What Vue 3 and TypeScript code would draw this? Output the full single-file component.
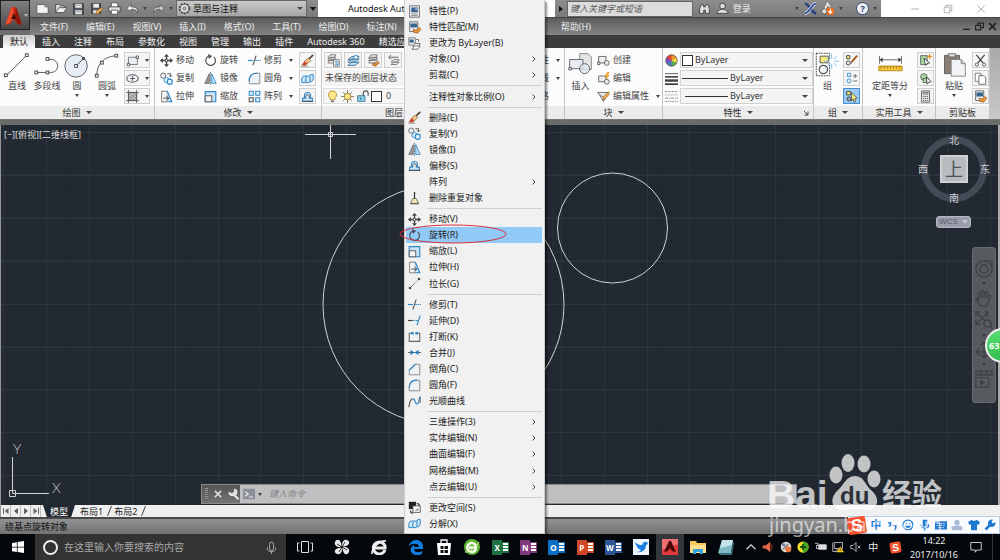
<script setup lang="ts">
import { h, ref } from 'vue'

const art: Record<string, string> = {
  logo: '<path d="M2 16 7 1h4l5 15-4-1-3-4-3 4z" fill="#c4240f"/><path d="M7 1h2v9l-3 4-4 2z" fill="#ee4a2c"/><path d="M11 1l5 15-4-1-2-5z" fill="#8e1508"/><path d="M9 6l2 5H7z" fill="#3a0a06"/>',
  fresh: '<path d="M1 3h10l4 3v8H1z" fill="#f2f2f2" stroke="#555"/><path d="M11 3v3h4" fill="#ccc" stroke="#555"/>',
  open: '<path d="M2 13V3h5l1 2h5v2" fill="#ddd" stroke="#444"/><path d="M2 13l4-6h10l-4 6z" fill="#eee" stroke="#444"/>',
  save: '<path d="M2 2h12v13H2z" fill="#4d565f" stroke="#333"/><path d="M4 2h8v5H4zM4 10h8v5H4z" fill="#e8e8e8"/><path d="M5 4h6M5 12h6" stroke="#888"/>',
  saveas: '<path d="M2 2h11v12H2z" fill="#4d565f" stroke="#333"/><path d="M4 2h7v5H4zM4 10h7v4H4z" fill="#e8e8e8"/><path d="M7 15l1-4 6-4 2 2-6 5z" fill="#f0b050" stroke="#7b4b1a" stroke-width=".7"/>',
  print: '<path d="M4 6V1h8v5" fill="#fff" stroke="#444"/><path d="M1 6h14v6H1z" fill="#e3e3e3" stroke="#333"/><path d="M4 10h8v5H4z" fill="#fff" stroke="#444"/>',
  undo: '<path d="M14 13c1-6-3-7-8-7V3L1 8l5 4V9c4 0 6 0 8 4z" fill="#eee" stroke="#444" stroke-width=".8"/>',
  redo: '<path d="M2 13C1 7 5 6 10 6V3l5 5-5 4V9c-4 0-6 0-8 4z" fill="#ccc" stroke="#444" stroke-width=".8"/>',
  gear: '<circle cx="8" cy="8" r="6" fill="none" stroke="#555" stroke-width="2.4" stroke-dasharray="2.4 1.4"/><circle cx="8" cy="8" r="5" fill="#eee" stroke="#555"/><circle cx="8" cy="8" r="2" fill="#bbb" stroke="#555"/>',
  line: '<path d="M3 27 26 4" stroke="#555" fill="none"/><rect x="1.500" y="24.500" width="3" height="3" fill="#fff" stroke="#444"/><rect x="24" y="3" width="3" height="3" fill="#fff" stroke="#444"/>',
  pline: '<path d="M5 23h14a7 7 0 0 0 1-14h-3" stroke="#555" fill="none"/><rect x="2" y="21.500" width="3" height="3" fill="#fff" stroke="#444"/><rect x="14" y="7" width="3" height="3" fill="#fff" stroke="#444"/><rect x="14" y="21.500" width="3" height="3" fill="#fff" stroke="#444"/>',
  circle: '<circle cx="14" cy="16" r="12" fill="#e6edf5" stroke="#5a5f66"/><path d="M14 16 22 8" stroke="#444"/><rect x="12.500" y="14.500" width="3" height="3" fill="#fff" stroke="#444"/><rect x="21" y="7" width="2" height="2" fill="#fff" stroke="#444"/>',
  arc: '<path d="M4 27C4 14 11 6 25 5" stroke="#555" fill="none"/><rect x="2.500" y="25" width="3" height="3" fill="#fff" stroke="#444"/><rect x="8" y="11" width="3" height="3" fill="#fff" stroke="#444"/><rect x="23.500" y="3.500" width="3" height="3" fill="#fff" stroke="#444"/>',
  rect: '<path d="M3 4h11v9H3z" fill="#e8eef4" stroke="#666"/><path d="M1.500 11.500h3v3h-3zM12.500 2.500h3v3h-3z" fill="#fff" stroke="#444"/>',
  ellipse: '<ellipse cx="8" cy="8" rx="7" ry="4.500" fill="#f1f4f8" stroke="#555" stroke-width="1.300"/><path d="M8 5v6M5 8h6" stroke="#444"/>',
  hatch: '<path d="M3 3h10v10H3z" fill="#bbb" stroke="#555"/><path d="M3 7l4-4M3 11l8-8M4 13l9-9M8 13l5-5" stroke="#888"/><path d="M3 0v16M13 0v16M0 3h16M0 13h16" stroke="#555"/>',
  move: '<path d="M8 1v14M1 8h14" stroke="#444" stroke-width="1.600"/><path d="M8 0 5 3.500h6zM8 16l-3-3.500h6zM0 8l3.500-3v6zM16 8l-3.500-3v6z" fill="#444"/><path d="M6.500 6.500h3v3h-3z" fill="#fff" stroke="#444"/>',
  copy: '<circle cx="4" cy="4.500" r="3.200" fill="#eef" stroke="#555"/><circle cx="8" cy="10" r="3.200" fill="#dff0fc" stroke="#2d86c8"/><circle cx="12" cy="12" r="3.200" fill="#dff0fc" stroke="#2d86c8" stroke-width="1.300"/><path d="M9 2h4v3M11 4l2 2 2-2" fill="none" stroke="#444"/>',
  stretch: '<path d="M2 1.500h7v13H2z" fill="#f6f6f6" stroke="#666"/><path d="M9 1.500l5.500 13H9" fill="#cfe8fa" stroke="#2d86c8" stroke-width="1.400"/><path d="M4 10h6M8 7.500l3 2.500-3 2.500" stroke="#333" fill="none"/>',
  rotate: '<path d="M12 3.500A6 6 0 1 1 6 2.500" fill="none" stroke="#4a4f55" stroke-width="1.400"/><path d="M5 0l5 2.500L6 6z" fill="#4a4f55"/>',
  mirror: '<path d="M6.500 2v12H1z" fill="#999" stroke="#666"/><path d="M9.500 2v12H15z" fill="#bfe0f7" stroke="#2d86c8"/><path d="M8 0v16" stroke="#555" stroke-dasharray="2 1"/>',
  scale: '<path d="M1.500 2h13v12.500h-13z" fill="#c9e4f8" stroke="#2d86c8" stroke-width="1.400"/><path d="M1.500 7h8v7.500h-8z" fill="#f3f3f3" stroke="#666" stroke-width="1.300"/>',
  trim: '<path d="M0 8h6" stroke="#2d86c8" stroke-width="1.400"/><path d="M9 8h7" stroke="#2d86c8" stroke-width="1.400" stroke-dasharray="2 1"/><path d="M10 2 6 14" stroke="#555" stroke-width="1.400"/>',
  extend: '<path d="M0 8h6" stroke="#444" stroke-width="1.400"/><path d="M7 8h5" stroke="#2d86c8" stroke-width="1.400" stroke-dasharray="2 1"/><path d="M15 2l-4 12" stroke="#2d86c8" stroke-width="1.400"/>',
  fillet: '<path d="M1.500 14.500V11C1.500 5 5 1.500 11 1.500h3.500v13z" fill="#eef1f4" stroke="#777"/><path d="M1.500 11C1.500 5 5 1.500 11 1.500" stroke="#2d86c8" fill="none" stroke-width="1.500"/>',
  chamfer: '<path d="M1.500 14.500V9L9 1.500h5.500v13z" fill="#eef1f4" stroke="#777"/><path d="M1.500 9 9 1.500" stroke="#2d86c8" stroke-width="1.500"/>',
  array: '<g fill="#e6f3fc" stroke="#2d86c8" stroke-width="1.300"><path d="M1.500 1.500h5v5h-5zM9.500 1.500h5v5h-5zM9.500 9.500h5v5h-5z"/><path d="M1.500 9.500h5v5h-5z" stroke="#555" fill="#eee"/></g>',
  erase: '<path d="M15 1 9 7" stroke="#5b4638" stroke-width="2"/><path d="M9 5l3 3-4 4-4-3z" fill="#f2c48a" stroke="#7a4317" stroke-width=".7"/><path d="M4 9l4 3-3 2.500-4-1z" fill="#c8452c"/><path d="M0 15h9" stroke="#777"/>',
  explode: '<g fill="#cfe8fa" stroke="#2d86c8" stroke-width="1.200"><path d="M1 8l2-3h4v4l-2 4H1z"/><path d="M6 7l1-2h5v6l-2 2H6z"/><path d="M11 5l1-2h3v6l-2 3h-2z"/></g>',
  offset: '<path d="M2 14v-4h3c-2-4 0-7 3-7s5 3 3 7h3v4z" fill="#cfe8fa" stroke="#2d86c8" stroke-width="1.300"/><path d="M1 14h14M6 10c-1-3 0-4 2-4s3 1 2 4" fill="none" stroke="#4a4f55" stroke-width="1.200"/>',
  layers: '<g fill="#e8edf2" stroke="#5a6068"><path d="M2 12l4-4h8l-4 4z"/><path d="M2 9l4-4h8l-4 4z"/><path d="M2 6l4-4h8l-4 4z"/></g>',
  layerProp: '<g fill="#f2f2f2" stroke="#666"><path d="M1 11l3-4h7l-3 4zM1 8l3-4h7L8 8zM1 5l3-4h7L8 5z"/><path d="M8 7h7v8H8z"/></g><path d="M10 9h3M10 11h4M10 13h4" stroke="#2d86c8"/>',
  layerBlue: '<g fill="#bfe0f7" stroke="#33668c"><path d="M1 14l5-4h9l-5 4zM1 10l5-4h9l-5 4zM1 7l5-4h9l-5 4z"/></g><circle cx="11" cy="4" r="2.500" fill="#eee" stroke="#2d86c8"/>',
  layerMatch: '<g fill="#f2f2f2" stroke="#666"><path d="M2 11l3-4h8l-3 4zM2 8l3-4h8l-3 4zM2 5l3-4h8l-3 4z"/></g><path d="M7 11l3 1 4-3 1 2-4 4-4-1z" fill="#e08a32" stroke="#9b4c14" stroke-width=".7"/>',
  layerPrev: '<g fill="#f2f2f2" stroke="#666"><path d="M5 13l3-3h7l-3 3zM5 10l3-3h7l-3 3z"/></g><path d="M14 4H3M5 1 2 4l3 3" stroke="#444" fill="none"/>',
  bulb: '<path d="M8 1a5 5 0 0 0-3 9v2h6v-2a5 5 0 0 0-3-9z" fill="#ffe88a" stroke="#b08a2a"/><path d="M6 13h4v2H6z" fill="#777"/>',
  sun: '<path d="M8 0v16M0 8h16M2.500 2.500l11 11M13.500 2.500l-11 11" stroke="#776a45"/><circle cx="8" cy="8" r="4" fill="#ffe98a" stroke="#8a7130"/>',
  lock: '<path d="M2 7h9v7H2z" fill="#8fd0ea" stroke="#2b6d8c"/><path d="M9 7V4a3 3 0 0 1 6 0v3" fill="none" stroke="#555" stroke-width="1.400"/><path d="M6 9v3" stroke="#245"/>',
  insert: '<path d="M14 2h10l4 4v15H14z" fill="#e5e5e5" stroke="#777"/><path d="M2 9h16v11H2z" fill="#e7edf3" stroke="#555"/><circle cx="20" cy="20" r="6" fill="#dfe7ef" fill-opacity=".8" stroke="#555"/><path d="M1 18.500h3v3H1z" fill="#fff" stroke="#444"/>',
  create: '<path d="M2 3h9v8H2z" fill="#eee" stroke="#555"/><circle cx="12" cy="11" r="3" fill="#e2eaf2" stroke="#555"/><path d="M.5 10h3v3h-3z" fill="#fff" stroke="#444"/>',
  blockEdit: '<path d="M2 5h9v7H2z" fill="#eee" stroke="#555"/><circle cx="12" cy="12" r="3" fill="#e2eaf2" stroke="#555"/><path d="M13 0l-3 5h2l-1 4 4-5h-2l2-4z" fill="#ffb52e" stroke="#d77f14" stroke-width=".6"/>',
  attr: '<path d="M1 3h12l-5 11z" fill="#eee" stroke="#555"/><path d="M4 6l4 3" stroke="#555"/><path d="M7 12l1-4 6-6 2 2-6 7z" fill="#f0b050" stroke="#7b4b1a" stroke-width=".7"/>',
  wheel: '<circle cx="8" cy="8" r="7" fill="#e5432f"/><path d="M8 8 8 1a7 7 0 0 1 6 3.500z" fill="#f39a2d"/><path d="M8 8l6-3.500a7 7 0 0 1 0 7z" fill="#f6e04c"/><path d="M8 8l6 3.500A7 7 0 0 1 8 15z" fill="#4bae4f"/><path d="M8 8v7a7 7 0 0 1-6-3.500z" fill="#3e7fd0"/><path d="M8 8l-6 3.500a7 7 0 0 1 0-7z" fill="#7a4fc0"/><circle cx="8" cy="8" r="7" fill="none" stroke="#555"/>',
  weights: '<path d="M0 2h16" stroke="#444"/><path d="M0 6h16" stroke="#444" stroke-width="2"/><path d="M0 10.500h16" stroke="#444" stroke-width="3"/><path d="M0 15h16" stroke="#333" stroke-width="2"/>',
  types: '<path d="M0 2h16" stroke="#777" stroke-dasharray="3 1"/><path d="M0 6h16" stroke="#777" stroke-dasharray="1 1"/><path d="M0 10h16" stroke="#777" stroke-dasharray="4 1 1 1"/><path d="M0 14h16" stroke="#777" stroke-dasharray="2 1"/>',
  group: '<path d="M1.500 1.500h16v27h-16z" fill="none" stroke="#222" stroke-dasharray="2 1"/><path d="M6 5h10v8H6z" fill="#fbe97d" stroke="#444"/><circle cx="10" cy="21" r="5" fill="#eef3f8" stroke="#555" stroke-width="1.500"/><path d="M20 2v18M11 11h18M14 5l12 12M26 5 14 17" stroke="#6bb8ea"/><circle cx="20" cy="11" r="3" fill="#fff"/>',
  groupEdit: '<path d="M2 2h4v4H2z" fill="#fbe97d" stroke="#333"/><circle cx="4" cy="11" r="2.500" fill="#eee" stroke="#333"/><path d="M8 10l7-8" stroke="#a35a1e" stroke-width="2.400"/><path d="M7 12l1-2" stroke="#333"/>',
  ungroup: '<path d="M3 1.500h4v4H3z" fill="#dff0fc" stroke="#2d86c8"/><circle cx="5" cy="11" r="2.500" fill="#dff0fc" stroke="#2d86c8"/><path d="M10 5h5M12.500 2.500v5M10 11h5" stroke="#555"/>',
  groupPick: '<path d="M2 2h5v4H2z" fill="#fbe97d" stroke="#333"/><circle cx="5" cy="11" r="2.500" fill="#9ab" stroke="#333"/><path d="M8 3l7 7-3 .5 1 4-2 .5-1-4-2 2z" fill="#fbe97d" stroke="#333" stroke-width=".8"/>',
  measure: '<path d="M2 5v10M30 5v10M3 10h26" stroke="#444"/><path d="M2 10l4-3v6zM30 10l-4-3v6z" fill="#444"/><path d="M1 18h30v6H1z" fill="#f5c338" stroke="#a97b10"/><path d="M4 18v3M8 18v3M12 18v3M16 18v3M20 18v3M24 18v3M28 18v3" stroke="#8a6410"/>',
  pick: '<path d="M2 2h8v11H2z" fill="#a9d9a0" stroke="#555"/><path d="M6 5l7 6-3 .5L8 14z" fill="#fff" stroke="#333"/><path d="M13 0v6M10 3h6" stroke="#e88e1e" stroke-width="1.500"/>',
  select: '<circle cx="6" cy="6" r="4" fill="#a9d9a0" stroke="#555"/><path d="M5 8h7v5H5z" fill="#a9d9a0" stroke="#555"/><path d="M9 6l6 6-3 .5L10 15z" fill="#fff" stroke="#333"/>',
  calc: '<path d="M3 1h10v14H3z" fill="#e2e2e2" stroke="#555"/><path d="M5 3h6v2H5z" fill="#fff" stroke="#555"/><path d="M5 8h6M5 10.500h6M5 13h6" stroke="#555" stroke-dasharray="1.500 .8"/>',
  paste: '<path d="M3 4h18v22H3z" fill="#8b8078" stroke="#555"/><path d="M8 2h8v4H8z" fill="#ddd" stroke="#555"/><path d="M11 9h12l5 5v15H11z" fill="#f1f3f6" stroke="#777"/><path d="M23 9v5h5" fill="#ccd" stroke="#777"/>',
  cut: '<path d="M3 1l8 10M13 1 5 11" stroke="#444" stroke-width="1.600"/><circle cx="3.500" cy="13" r="2" fill="none" stroke="#444"/><circle cx="12.500" cy="13" r="2" fill="none" stroke="#444"/>',
  pages: '<path d="M1.500 1.500h7v10h-7z" fill="#fff" stroke="#666"/><path d="M6 4.500h6l2.500 2.500v8H6z" fill="#fff" stroke="#555"/>',
  props: '<path d="M2 1h12v14H2z" fill="#f3f3f3" stroke="#555"/><path d="M4 3h8v6H4z" fill="#35628f"/><path d="M9 4h2v2H9z" fill="#bcd"/><path d="M4 11h8M4 13h8" stroke="#777"/>',
  match: '<path d="M2 1h10v12H2z" fill="#f3f3f3" stroke="#555"/><path d="M3 3h8v5H3z" fill="#35628f"/><path d="M6 10l4 1 4-3 2 2-4 5-5-1z" fill="#e8953a" stroke="#8a4a14" stroke-width=".7"/>',
  bylayer: '<path d="M1 1h8v9H1z" fill="#f3f3f3" stroke="#666"/><path d="M2 3h5v4H2z" fill="#35628f"/><path d="M10 3h3v3M5 15l3-4h7l-3 4zM6 12l2-4h7l-2 3" fill="#fff" stroke="#555"/>',
  broom: '<path d="M8 0v8" stroke="#333" stroke-width="1.500"/><path d="M6 8h4l3 6H3z" fill="#f4e9b8" stroke="#555"/><path d="M3 14.500h10" stroke="#444"/>',
  lengthen: '<path d="M3 13 8 8" stroke="#555"/><path d="M8 8l5-5" stroke="#2d86c8" stroke-dasharray="2 1"/><circle cx="2.500" cy="13.500" r="1.600" fill="#444"/><circle cx="13.500" cy="2.500" r="1.600" fill="#444"/>',
  breakAt: '<path d="M5 4H1.500v10h13V4H11" fill="#f0f2f4" stroke="#666" stroke-width="1.300"/><path d="M4 4h3M9 4h3" stroke="#2d86c8" stroke-width="3"/>',
  join: '<path d="M0 8h16" stroke="#444"/><path d="M3 5l5 3-5 3zM13 5 8 8l5 3z" fill="#2478b8"/>',
  blend: '<path d="M1 15C2 8 3 6 5 5" fill="none" stroke="#555" stroke-width="1.400"/><path d="M5 5c4-2 3 6 6 6s2-6 4-9" fill="none" stroke="#2d86c8" stroke-width="1.500"/><path d="M15 2v8" stroke="#555"/>',
  space: '<path d="M1 1h9v9H1z" fill="#222"/><path d="M6 6h9v8H6z" fill="#fff" stroke="#444"/><path d="M3 12c0 2 1 3 3 3M11 3c2 0 3 1 3 3" fill="none" stroke="#222" stroke-width="1.300"/><path d="M8 12l5-4v4z" fill="#999"/>',
  binoc: '<path d="M2 14V8l2-5h2l1 3h2l1-3h2l2 5v6h-5v-4H7v4z" fill="#ddd" stroke="#333"/>',
  person: '<circle cx="8" cy="5" r="3.500" fill="#ddd" stroke="#333"/><path d="M1 14c1-4 4-5 7-5s6 1 7 5z" fill="#ddd" stroke="#333"/>',
  exchange: '<path d="M1 2c3 0 4 2 7 6s4 6 7 6" stroke="#2c3f84" stroke-width="3" fill="none"/><path d="M15 2c-3 0-4 2-7 6s-4 6-7 6" stroke="#dfe6ff" stroke-width="4" fill="none"/><path d="M15 2c-3 0-4 2-7 6s-4 6-7 6" stroke="#35509a" stroke-width="2.400" fill="none"/>',
  cloud: '<path d="M4 11 8 2l3 4" fill="none" stroke="#eee" stroke-width="2"/><circle cx="4" cy="11.500" r="3.200" fill="#ddd" stroke="#555"/><path d="M7 7h9v9H7z" fill="#e56a1c"/><path d="M11.500 8v5M9 11l2.500 3 2.500-3" fill="none" stroke="#fff" stroke-width="1.300"/>',
  min: '<path d="M2 8h12" stroke="currentColor"/>',
  restore: '<path d="M2 5h9v9H2zM5 5V2h9v9h-3" fill="none" stroke="currentColor"/>',
  close: '<path d="M2 2l12 12M14 2 2 14" stroke="currentColor"/>',
  minB: '<path d="M2 13h12" stroke="#222" stroke-width="2.500"/>',
  restoreB: '<path d="M1 6h9v8H1zM5 6V2h10v8h-5" fill="none" stroke="#222" stroke-width="1.800"/>',
  closeB: '<path d="M2 2l12 12M14 2 2 14" stroke="#222" stroke-width="3"/>',
  closeL: '<path d="M3 3l10 10M13 3 3 13" stroke="#ddd" stroke-width="2.400"/>',
  wrench: '<path d="M14 15 7 8" stroke="currentColor" stroke-width="3"/><path d="M8 1v4L5 7 1 5a4.500 4.500 0 0 0 7 5 4.500 4.500 0 0 0 0-9z" fill="currentColor"/>',
  wrench2: '<path d="M2 14l7-7" stroke="currentColor" stroke-width="3.400"/><path d="M15 4l-3 2L10 4l2-3a5 5 0 1 0 3 3z" fill="currentColor"/>',
  first: '<path d="M4 3v10" stroke="#666" stroke-width="1.600"/><path d="M12 3v10L6 8z" fill="#666"/>',
  prev: '<path d="M11 3v10L5 8z" fill="#555"/>',
  next: '<path d="M5 3v10l6-5z" fill="#555"/>',
  last: '<path d="M12 3v10" stroke="#666" stroke-width="1.600"/><path d="M4 3v10l6-5z" fill="#666"/>',
  win: '<path d="M0 2.500 6.500 1.500v6H0zM7.500 1.300 16 0v7.500H7.500zM0 8.500h6.500v6L0 13.500zM7.500 8.500H16V16l-8.500-1.300z" fill="#fff"/>',
  mic: '<path d="M5.500 4a2.500 2.500 0 0 1 5 0v5a2.500 2.500 0 0 1-5 0zM3 8v2c0 4 10 4 10 0V8M8 13v3" fill="none" stroke="#aaa" stroke-width="1.200"/>',
  taskview: '<path d="M4.500 2.500h7v11h-7zM2.500 4H.5v8h2M13.500 4h2v8h-2" fill="none" stroke="#ddd"/>',
  swirl: '<g fill="#e8e8e8"><path d="M7.600 7.600C3 9 0 6 1 3s6-4 6.600 4.600z"/><path d="M8.400 7.600C7 3 10 0 13 1s4 6-4.600 6.600z"/><path d="M8.400 8.400C13 7 16 10 15 13s-6 4-6.600-4.600z"/><path d="M7.600 8.400C9 13 6 16 3 15s-4-6 4.600-6.600z"/></g><path d="M8 8 3 5M8 8l3-5M8 8l5 3M8 8l-3 5" stroke="#06090d" stroke-width=".8"/>',
  ie: '<path d="M14 11A6 6 0 1 1 14 7v2H4" fill="none" stroke="#eee" stroke-width="3"/><path d="M1 15C0 10 9 1 15 2" fill="none" stroke="#eee" stroke-width="1.600"/>',
  edge: '<path d="M1 7C3-1 15-1 15 8v2H6c0 4 5 4 8 2v3C8 18 1 15 3 9c1-2 3-3 4-3-1 1-1 1-1 2h5c0-4-7-4-10-1z" fill="#0f7fe0"/>',
  store: '<path d="M1 4h14l-1 12H2z" fill="#fff"/><path d="M5 4V1h6v3" fill="none" stroke="#fff" stroke-width="1.300"/><path d="M4.500 7h3v3h-3zM8.500 7h3.500v3H8.500zM4.500 11h3v3h-3zM8.500 11h3.500v3H8.500z" fill="#111"/>',
  browser: '<circle cx="8" cy="8" r="8" fill="#5cb52f"/><path d="M12 10A4.500 4.500 0 1 1 12 7v1.500H5" fill="none" stroke="#fff" stroke-width="2.400"/><path d="M1 13C4 14 14 7 15 3" stroke="#e5f19a" fill="none"/>',
  folder: '<path d="M0 2h6l1 2h9v10H0z" fill="#f5c95b"/><path d="M0 6h16v8H0z" fill="#fde08b"/><path d="M3 15v-5h10v5h-3v-2H6v2z" fill="#35a0dc"/>',
  bird: '<path d="M0 0h16v16H0z" fill="#eef6fd"/><path d="M2 3c3 3 5 3 7 3 1-3 3-4 5-3l1 2-2 1c0 5-4 8-9 7 2 0 3-1 4-2C5 10 3 7 2 3z" fill="#1c7fe0"/>',
  acad: '<path d="M0 0h16v16H0z" fill="#e23a3a"/><path d="M0 0h16v5L0 11z" fill="#ee7070"/><path d="M2 13 7 2h2l5 11-4-1-2-3-2 3z" fill="#4a0808"/>',
  note: '<path d="M4 1h11l-2 13H0z" fill="#7fb9c4"/><path d="M4 1h11l-1 5L2 9z" fill="#c5e3e6"/><path d="M0 14h13l2-11 1 1-2 12H2z" fill="#3f6f7c"/>',
  up: '<path d="M2 11l6-6 6 6" fill="none" stroke="#ddd" stroke-width="1.500"/>',
  horn: '<path d="M1 6h4l6-5v14l-6-5H1z" fill="#e4674a"/><path d="M13 4v8" stroke="#7b2b1c" stroke-width="1.500"/>',
  qball: '<circle cx="8" cy="8" r="7" fill="#ddd"/><path d="M4 11 11 4" stroke="#777" stroke-width="2"/><circle cx="11" cy="11" r="4" fill="#e8793e"/><circle cx="5" cy="5" r="2" fill="#67a"/>',
  plusball: '<circle cx="8" cy="8" r="7.500" fill="#f1dd28"/><path d="M8 0.500a7.500 7.500 0 0 1 0 15z" fill="#48a82c"/><path d="M8 4v8M4 8h8" stroke="#15540f" stroke-width="2.500"/>',
  battery: '<path d="M5 5h10v6H5z" fill="#ddd" stroke="#eee"/><path d="M0 3h4v3H2v4h3" fill="none" stroke="#eee"/>',
  network: '<path d="M3 2h11v8H3zM1 2v12h6M5 12h4" fill="none" stroke="#ddd"/><path d="M11 7l5 8H6z" fill="#f6c21c"/><path d="M11 10v3" stroke="#222"/>',
  mute: '<path d="M1 6h3l4-4v12l-4-4H1z" fill="none" stroke="#ddd"/><path d="M10 6l4 4M14 6l-4 4" stroke="#ddd"/>',
  notice: '<path d="M1 2h14v10H9l-2 3v-3H1z" fill="none" stroke="#ddd" stroke-width="1.200"/>',
  smile: '<circle cx="8" cy="8" r="6.500" fill="none" stroke="#1f78d0" stroke-width="1.800"/><path d="M4 9c2 4 6 4 8 0z" fill="#1f78d0"/><path d="M5.500 5v2M10.500 5v2" stroke="#1f78d0" stroke-width="1.500"/>',
  micB: '<path d="M5 1h6v9H5z" fill="#1f78d0"/><path d="M3 7c0 7 10 7 10 0M8 12v4" fill="none" stroke="#1f78d0" stroke-width="1.600"/>',
  keyb: '<path d="M0 3h16v11H0z" fill="#1f78d0"/><path d="M2 6h12M2 8.500h12M4 11.500h8" stroke="#fff" stroke-dasharray="2 1"/>',
  user: '<circle cx="8" cy="4.500" r="3.500" fill="#a9b9d8"/><path d="M1 15V11c1-3 13-3 14 0v4z" fill="#a9b9d8"/>',
  shirt: '<path d="M5 1c1 2 5 2 6 0l5 3-2 4-2-1v8H4V7L2 8 0 4z" fill="#1f78d0"/>',
  comma: '<path d="M3 5h3v3L4 10M9 9h4v3l-2 3" fill="none" stroke="#1f78d0" stroke-width="2"/>',
  hand: '<path d="M7 21 1 13c-1-3 2-2 4 1L4 5c0-2 3-2 3 0l1 6V3c0-2 3-2 3 0v8l2-7c0-2 3-1 3 0l-2 8 3-4c1-1 3 0 2 2l-4 9-2 2z" fill="none" stroke="#3d4146" stroke-width="1.500"/>',
  steer: '<circle cx="10" cy="10" r="9" fill="none" stroke="#3d4146" stroke-width="1.500"/><circle cx="10" cy="10" r="4.500" fill="none" stroke="#3d4146" stroke-width="1.500"/><path d="M10 1h9v9" fill="none" stroke="#3d4146"/>',
  zoomx: '<path d="M2 2l12 12M14 2 2 14M1 6V1h5M10 1h4v5M1 10v5h5" fill="none" stroke="#3d4146" stroke-width="1.500"/><circle cx="14" cy="14" r="4" fill="#575b5f" stroke="#3d4146" stroke-width="1.500"/><path d="M17 17l3 3" stroke="#3d4146" stroke-width="2"/>',
  orbit: '<path d="M10 1v18M1 12h16M10 1 6 5M10 1l4 4M1 12l4-4M1 12l4 4M10 19l-4-4M10 19l4-4" fill="none" stroke="#3d4146" stroke-width="1.500"/>',
  motion: '<path d="M1 1h5v5H1zM8 1h5v5H8zM15 1h5v5h-5zM1 9h15v11H1z" fill="none" stroke="#3d4146" stroke-width="1.300"/><path d="M6 11v7l6-3.500z" fill="#3d4146"/>',
  prompt: '<path d="M0 1h16v14H0z" fill="#8b909a"/><path d="M3 5l4 3-4 3M8 12h5" fill="none" stroke="#eee" stroke-width="1.500"/>',
}

const Icon = (p: { name: string; box?: number }) =>
  h('svg', { viewBox: `0 0 ${p.box ?? 16} ${p.box ?? 16}`, 'aria-hidden': 'true', innerHTML: art[p.name] ?? '' })
Icon.props = ['name', 'box']

const menus = ['文件(F)', '编辑(E)', '视图(V)', '插入(I)', '格式(O)', '工具(T)', '绘图(D)', '标注(N)', '帮助(H)']
const tabs = ['默认', '插入', '注释', '布局', '参数化', '视图', '管理', '输出', '插件', 'Autodesk 360', '精选应用']
const active = ref('默认')

const drawTools = [
  { icon: 'line', label: '直线', more: false },
  { icon: 'pline', label: '多段线', more: false },
  { icon: 'circle', label: '圆', more: true },
  { icon: 'arc', label: '圆弧', more: true },
]
const modify = [
  [['move', '移动'], ['copy', '复制'], ['stretch', '拉伸']],
  [['rotate', '旋转'], ['mirror', '镜像'], ['scale', '缩放']],
  [['trim', '修剪'], ['fillet', '圆角'], ['array', '阵列']],
]
const propRows = [
  { icon: 'wheel', name: '颜色', kind: 'color' },
  { icon: 'weights', name: '线宽', kind: 'weight' },
  { icon: 'types', name: '线型', kind: 'type' },
]

interface Entry { text: string; icon?: string; sub?: boolean }
const groups: Entry[][] = [
  [
    { text: '特性(P)', icon: 'props' },
    { text: '特性匹配(M)', icon: 'match' },
    { text: '更改为 ByLayer(B)', icon: 'bylayer' },
    { text: '对象(O)', sub: true },
    { text: '剪裁(C)', sub: true },
  ],
  [{ text: '注释性对象比例(O)', sub: true }],
  [
    { text: '删除(E)', icon: 'erase' },
    { text: '复制(Y)', icon: 'copy' },
    { text: '镜像(I)', icon: 'mirror' },
    { text: '偏移(S)', icon: 'offset' },
    { text: '阵列', sub: true },
    { text: '删除重复对象', icon: 'broom' },
  ],
  [
    { text: '移动(V)', icon: 'move' },
    { text: '旋转(R)', icon: 'rotate' },
    { text: '缩放(L)', icon: 'scale' },
    { text: '拉伸(H)', icon: 'stretch' },
    { text: '拉长(G)', icon: 'lengthen' },
  ],
  [
    { text: '修剪(T)', icon: 'trim' },
    { text: '延伸(D)', icon: 'extend' },
    { text: '打断(K)', icon: 'breakAt' },
    { text: '合并(J)', icon: 'join' },
    { text: '倒角(C)', icon: 'chamfer' },
    { text: '圆角(F)', icon: 'fillet' },
    { text: '光顺曲线', icon: 'blend' },
  ],
  [
    { text: '三维操作(3)', sub: true },
    { text: '实体编辑(N)', sub: true },
    { text: '曲面编辑(F)', sub: true },
    { text: '网格编辑(M)', sub: true },
    { text: '点云编辑(U)', sub: true },
  ],
  [
    { text: '更改空间(S)', icon: 'space' },
    { text: '分解(X)', icon: 'explode' },
  ],
]
const hot = '旋转(R)'

const steps = (n: number, start: number, step: number) => Array.from({ length: n }, (_, i) => Math.round(start + i * step))
const majorX = steps(60, 2, 42.9)
const majorY = steps(40, 7, 42.9)
const minorX = steps(300, 2, 8.58)
const minorY = steps(200, -2, 8.58)

const apps = [
  { icon: 'edge' }, { icon: 'store' }, { icon: 'browser' },
  { letter: 'X', color: '#1e7145' }, { letter: 'N', color: '#80397b' }, { letter: 'O', color: '#0a6fc2' },
  { letter: 'P', color: '#d04727' }, { letter: 'W', color: '#2b5797' },
  { icon: 'bird' }, { icon: 'acad', on: true }, { icon: 'folder' }, { icon: 'note' },
]
const tray = ['up', 'horn', 'qball', 'plusball', 'battery', 'network', 'mute']
</script>

<template>
  <div class="screen">
    <header class="head">
      <button class="logo" aria-label="应用程序菜单"><Icon name="logo" class="logo-a" /><i class="caret light"></i></button>
      <div class="titlebar">
        <div class="qat">
          <button v-for="n in ['fresh', 'open', 'save', 'saveas', 'print', 'undo']" :key="n" class="qbtn" :aria-label="n"><Icon :name="n" class="i13" /></button>
          <i class="caret"></i>
          <button class="qbtn" aria-label="redo"><Icon name="redo" class="i13" /></button>
          <i class="caret"></i>
          <label class="workspace">
            <Icon name="gear" class="i13" />
            <select aria-label="工作空间"><option>草图与注释</option></select>
            <i class="caret big"></i>
          </label>
          <i class="caret dark"></i>
        </div>
        <div class="title">Autodesk Aut</div>
        <div class="info">
          <i class="tri"></i>
          <input type="text" class="find" placeholder="键入关键字或短语" aria-label="搜索" />
          <button class="qbtn" aria-label="搜索"><Icon name="binoc" class="i13" /></button>
          <button class="login"><Icon name="person" class="i13" />登录</button>
          <i class="caret"></i>
          <button class="qbtn" aria-label="Exchange"><Icon name="exchange" class="i13" /></button>
          <button class="qbtn" aria-label="360"><Icon name="cloud" class="i13" /></button>
          <i class="caret"></i>
          <button class="help">?</button>
          <i class="caret"></i>
        </div>
        <div class="winctl">
          <button aria-label="最小化"><Icon name="min" class="i10" /></button>
          <button aria-label="还原"><Icon name="restore" class="i10" /></button>
          <button aria-label="关闭"><Icon name="close" class="i10" /></button>
        </div>
      </div>
      <nav class="menubar">
        <button v-for="m in menus" :key="m">{{ m }}</button>
        <span class="docctl">
          <Icon name="minB" class="i8" /><Icon name="restoreB" class="i8" /><Icon name="closeB" class="i8" />
        </span>
      </nav>
    </header>

    <nav class="tabs">
      <button v-for="t in tabs" :key="t" :class="{ on: t === active }" @click="active = t">{{ t }}</button>
    </nav>

    <section class="ribbon">
      <div class="panel draw">
        <div class="body">
          <button v-for="t in drawTools" :key="t.label" class="tool">
            <Icon :name="t.icon" :box="30" class="i28" /><span>{{ t.label }}</span><i v-if="t.more" class="caret"></i>
          </button>
          <div class="stack">
            <button v-for="n in ['rect', 'ellipse', 'hatch']" :key="n" class="split" :aria-label="n"><Icon :name="n" class="i13" /><i class="caret"></i></button>
          </div>
        </div>
        <h2>绘图<i class="caret big"></i></h2>
      </div>

      <div class="panel modify">
        <div class="body">
          <div v-for="(col, c) in modify" :key="c" class="stack">
            <button v-for="[n, label] in col" :key="n" class="row"><Icon :name="n" class="i13" />{{ label }}<i v-if="c === 2" class="caret"></i></button>
          </div>
          <div class="stack end">
            <button v-for="n in ['erase', 'explode', 'offset']" :key="n" class="sq" :aria-label="n"><Icon :name="n" class="i13" /></button>
          </div>
        </div>
        <h2>修改<i class="caret big"></i></h2>
      </div>

      <div class="panel layer">
        <div class="body column">
          <div class="line">
            <button v-for="n in ['layerProp', 'layerBlue', 'layerMatch', 'layerPrev', 'layers']" :key="n" class="sq" :aria-label="n"><Icon :name="n" class="i13" /></button>
          </div>
          <select class="state" aria-label="图层状态"><option>未保存的图层状态</option></select>
          <div class="line field">
            <Icon name="bulb" class="i13" /><Icon name="sun" class="i13" /><Icon name="lock" class="i13" /><i class="swatch"></i>0
          </div>
        </div>
        <h2>图层</h2>
      </div>

      <div class="panel note">
        <div class="body">
          <div class="stack">
            <button class="row">线性<i class="caret"></i></button>
            <button class="row">引线<i class="caret"></i></button>
            <button class="row">表格</button>
          </div>
        </div>
        <h2></h2>
      </div>

      <div class="panel block">
        <div class="body">
          <button class="tool"><Icon name="insert" :box="30" class="i26" /><span>插入</span></button>
          <div class="stack">
            <button class="row"><Icon name="create" class="i13" />创建</button>
            <button class="row"><Icon name="blockEdit" class="i13" />编辑</button>
            <button class="row"><Icon name="attr" class="i13" />编辑属性<i class="caret"></i></button>
          </div>
        </div>
        <h2>块<i class="caret big"></i></h2>
      </div>

      <div class="panel props">
        <div class="body column">
          <label v-for="p in propRows" :key="p.kind" class="prop" :class="p.kind">
            <Icon :name="p.icon" class="i13" />
            <span class="combo">
              <i :class="p.kind === 'color' ? 'swatch' : 'rule'"></i>
              <select :aria-label="p.name"><option>ByLayer</option></select>
              <i class="caret big"></i>
            </span>
          </label>
        </div>
        <h2>特性<i class="caret big"></i><svg class="launch" viewBox="0 0 6 6"><path d="M1 1l4 4M5 1.500V5H1.500" fill="none" stroke="#444" /></svg></h2>
      </div>

      <div class="panel group">
        <div class="body">
          <button class="tool"><Icon name="group" :box="30" class="i26" /><span>组</span></button>
          <div class="stack">
            <button class="sq" aria-label="编辑组"><Icon name="groupEdit" class="i13" /></button>
            <button class="sq" aria-label="解除编组"><Icon name="ungroup" class="i13" /></button>
            <button class="sq on" aria-label="选择组"><Icon name="groupPick" class="i13" /></button>
          </div>
        </div>
        <h2>组<i class="caret big"></i></h2>
      </div>

      <div class="panel util">
        <div class="body">
          <button class="tool"><Icon name="measure" :box="32" class="i26" /><span>定距等分</span><i class="caret"></i></button>
          <div class="stack">
            <button v-for="n in ['pick', 'select', 'calc']" :key="n" class="sq" :aria-label="n"><Icon :name="n" class="i13" /></button>
          </div>
        </div>
        <h2>实用工具<i class="caret big"></i></h2>
      </div>

      <div class="panel clip">
        <div class="body">
          <button class="tool"><Icon name="paste" :box="30" class="i26" /><span>粘贴</span><i class="caret"></i></button>
          <div class="stack">
            <button v-for="n in ['cut', 'pages', 'match']" :key="n" class="sq" :aria-label="n"><Icon :name="n" class="i13" /></button>
          </div>
        </div>
        <h2>剪贴板</h2>
      </div>
      <div class="rest"></div>
    </section>

    <main class="canvas">
      <svg class="drawing">
        <g stroke="#242c35"><path v-for="x in minorX" :key="'a' + x" :d="`M${x}.5 0V2000`" /><path v-for="y in minorY" :key="'b' + y" :d="`M0 ${y}.5H3000`" /></g>
        <g stroke="#2d3543"><path v-for="x in majorX" :key="'c' + x" :d="`M${x}.5 0V2000`" /><path v-for="y in majorY" :key="'d' + y" :d="`M0 ${y}.5H3000`" /></g>
        <g transform="translate(-1 -125)" fill="none" stroke="#d0d2d4">
          <circle cx="443.500" cy="304.500" r="120.500" />
          <circle cx="612.500" cy="228" r="55" />
          <path d="M305 134.500h51M330.500 125v34M328.500 132.500h4v4h-4z" />
          <path d="M12.500 457v36.500H49M9.500 490.500h6v6h-6z" />
        </g>
        <g class="ucs"><text x="12" y="329">Y</text><text x="51" y="368">X</text></g>
      </svg>
      <span class="viewlabel">[−][俯视][二维线框]</span>

      <aside class="compass">
        <span class="n">北</span><span class="w">西</span><button class="cube">上</button><span class="e">东</span><span class="s">南</span>
      </aside>
      <button class="wcs">WCS<i class="caret pale"></i></button>
      <aside class="navbar">
        <button aria-label="全导航"><Icon name="steer" :box="20" class="i18" /></button>
        <i class="caret gray"></i>
        <button aria-label="平移"><Icon name="hand" :box="22" class="i18" /></button>
        <button aria-label="缩放"><Icon name="zoomx" :box="20" class="i18" /></button>
        <i class="caret gray"></i>
        <button aria-label="动态观察"><Icon name="orbit" :box="20" class="i18" /></button>
        <i class="caret gray"></i>
        <button aria-label="ShowMotion"><Icon name="motion" :box="21" class="i18" /></button>
      </aside>
      <div class="ball">63</div>

      <div class="cmd">
        <div class="cmd-left"><i class="grip"></i><Icon name="closeL" class="i10" /><Icon name="wrench" class="i11" /></div>
        <Icon name="prompt" class="i11" /><i class="caret"></i>
        <input type="text" placeholder="键入命令" aria-label="命令行" />
      </div>
    </main>

    <div class="sheets">
      <button v-for="n in ['first', 'prev', 'next', 'last']" :key="n" class="step" :aria-label="n"><Icon :name="n" class="i10" /></button>
      <button class="sheet on">模型</button>
      <button class="sheet">布局1</button>
      <button class="sheet">布局2</button>
    </div>
    <div class="status">绕基点旋转对象</div>

    <footer class="taskbar">
      <button class="start" aria-label="开始"><Icon name="win" class="i12" /></button>
      <label class="search"><i class="ring"></i><input type="text" placeholder="在这里输入你要搜索的内容" aria-label="搜索" /><Icon name="mic" class="i13" /></label>
      <button v-for="n in ['taskview', 'swirl', 'ie']" :key="n" class="wide" :aria-label="n"><Icon :name="n" class="i16" /></button>
      <div class="apps">
        <button v-for="(a, k) in apps" :key="k" :class="{ on: a.on }">
          <Icon v-if="a.icon" :name="a.icon" class="i16" />
          <span v-else class="office" :style="{ '--c': a.color }"><b>{{ a.letter }}</b><i></i></span>
        </button>
      </div>
      <div class="tray">
        <button v-for="n in tray" :key="n" :aria-label="n"><Icon :name="n" class="i12" /></button>
        <button>中</button>
      </div>
      <button class="sogou" aria-label="输入法"><span class="s-logo">S</span></button>
      <time class="clock">14:22<br />2017/10/16</time>
      <button class="notice" aria-label="通知"><Icon name="notice" class="i12" /></button>
      <i class="peek"></i>
    </footer>

    <aside class="ime">
      <span class="s-logo large">S</span>
      <b>中</b>
      <Icon v-for="n in ['comma', 'smile', 'micB', 'keyb', 'user', 'shirt', 'wrench2']" :key="n" :name="n" class="i11" />
    </aside>

    <svg class="mark" viewBox="0 0 190 90" aria-hidden="true">
      <g fill="#fff" fill-opacity=".72">
        <text x="2" y="58" class="m-latin">Bai</text>
        <ellipse cx="71" cy="25" rx="6.500" ry="8.500" /><ellipse cx="83" cy="13" rx="6.500" ry="9" /><ellipse cx="99" cy="14" rx="6.500" ry="8.500" /><ellipse cx="109" cy="29" rx="6.500" ry="8.500" />
        <path d="M90 26c9 0 10 9 16 14 11 9 6 21-5 20-8-1-14-1-22 0-12 1-16-11-6-20 6-5 8-14 17-14z" />
        <text x="117" y="55" class="m-cjk">经验</text>
        <text x="4" y="82" class="m-url">jingyan.baidu.com</text>
      </g>
      <text x="75" y="54" class="m-du">du</text>
    </svg>

    <ul class="context" role="menu">
      <template v-for="(g, k) in groups" :key="k">
        <li v-if="k" class="sep" role="separator"></li>
        <li v-for="e in g" :key="e.text" class="entry">
          <button role="menuitem" :class="{ hot: e.text === hot }">
            <Icon :name="e.icon ?? ''" class="i13" /><span>{{ e.text }}</span>
            <svg v-if="e.sub" class="chev" viewBox="0 0 6 8"><path d="M1.500 1.500 4 4 1.500 6.500" fill="none" stroke="#444" /></svg>
          </button>
        </li>
      </template>
    </ul>
    <svg class="lasso" viewBox="0 0 108 20"><ellipse cx="54" cy="10" rx="53" ry="9" fill="none" stroke="#d8343f" /></svg>
  </div>
</template>

<style>
html, body { margin: 0; overflow: hidden; }
</style>

<style scoped>
.screen {
  position: relative; height: 100vh; display: flex; flex-direction: column; overflow: hidden;
  font: 9px/12px "Noto Sans", "Noto Sans CJK SC", sans-serif; color: #333; background: #212830;
}
.screen * { box-sizing: border-box; }
button, input, select { font: inherit; color: inherit; border: 0; padding: 0; margin: 0; background: none; white-space: nowrap; }
select { appearance: none; }
input { min-width: 0; outline: 0; }
svg { flex: none; display: block; }
.i8 { width: 9px; height: 9px; } .i10 { width: 10px; height: 10px; } .i11 { width: 12px; height: 12px; }
.i12 { width: 12px; height: 12px; } .i13 { width: 13px; height: 13px; } .i16 { width: 16px; height: 16px; }
.i18 { width: 18px; height: 18px; } .i26 { width: 25px; height: 25px; } .i28 { width: 28px; height: 28px; }
.caret { flex: none; width: 0; height: 0; border: 2px solid transparent; border-top: 3px solid #444; border-bottom: 0; }
.caret.big { border-width: 3px 3px 0; }
.caret.light { border-top-color: #bbb; } .caret.dark { border-width: 4px 3px 0; border-top-color: #111; }
.caret.pale { border-width: 4px 3px 0; border-top-color: #c5c8d2; } .caret.gray { border-top-color: #34383c; }

.head { flex: none; display: grid; grid-template-columns: 30px 1fr; grid-template-rows: 18px 17px; background: linear-gradient(#5c5c5c, #858585) 0 18px no-repeat; }
.logo { grid-row: 1 / 3; height: 30px; display: flex; align-items: center; justify-content: center; gap: 2px; background: linear-gradient(#808080, #484848); border: 1px solid #222; }
.logo-a { width: 19px; height: 21px; }
.titlebar { display: flex; background: linear-gradient(#8e8e8e, #7a7a7a); border-bottom: 1px solid #444; }
.qat { flex: none; width: 288px; display: flex; align-items: center; padding-left: 3px; }
.qbtn { width: 17px; display: grid; place-items: center; }
.qat .qbtn { width: 18px; }
.qat > .caret { margin: 0 2px; }
.workspace { margin-left: 1px; margin-right: 1px; flex: 1; height: 17px; display: flex; align-items: center; gap: 2px; padding: 0 3px 0 1px; background: linear-gradient(#c9c9c9, #a6a6a6); border: 1px solid #666; color: #111; }
.workspace select { flex: 1; }
.title { flex: 1; padding-left: 30px; background: #fff; color: #111; line-height: 17px; white-space: nowrap; overflow: hidden; }
.info { flex: none; width: 326px; display: flex; align-items: center; color: #eee; }
.tri { border: 3px solid transparent; border-left: 4px solid #111; border-right: 0; margin: 0 4px; }
.find { width: 131px; height: 16px; margin-right: 3px; background: #dcdcdc; border: 1px solid #666; padding-left: 2px; font-style: italic; }
.find::placeholder { color: #555; opacity: 1; }
.login { display: flex; align-items: center; gap: 4px; margin: 0 40px 0 3px; }
.info .caret { margin: 0 4px; }
.help { width: 13px; height: 13px; margin-left: 9px; border-radius: 50%; background: #eee; border: 1px solid #35507c; color: #24427c; font-weight: 700; line-height: 11px; }
.winctl { flex: none; width: 119px; padding-left: 17px; background: #fff; color: #888; display: flex; }
.winctl button { width: 33px; display: grid; place-items: center; }
.menubar { display: flex; align-items: center; gap: 18px; padding-left: 10px; color: #eee; background: linear-gradient(#5c5c5c, #858585); }
.menubar button:nth-last-child(2) { margin-left: 146px; }
.docctl { margin-left: auto; display: flex; gap: 4px; padding-right: 3px; }
.tabs { flex: none; height: 13px; display: flex; padding-left: 3px; background: #3c3c3c; color: #f0f0f0; }
.tabs button { padding: 0 7px; }
.tabs .on { background: linear-gradient(#cfcfcf, #fafafa); color: #222; border-radius: 2px 2px 0 0; }

.ribbon { flex: none; display: flex; background: #fcfcfc; border-bottom: 1px solid #777; color: #444; box-shadow: 0 1px 0 #999; }
.panel { flex: none; display: flex; flex-direction: column; border-right: 1px solid #c4c4c4; white-space: nowrap; }
.body { height: 58px; display: flex; padding: 4px 0 2px; }
.body.column { flex-direction: column; gap: 2px; }
.panel h2 { position: relative; margin: 0; height: 13px; display: flex; align-items: center; justify-content: center; gap: 5px; font: inherit; background: #ebebeb; color: #333; }
.launch { position: absolute; right: 4px; top: 4px; width: 6px; height: 6px; }
.draw { width: 155px; } .modify { width: 167px; } .layer { width: 159px; } .note { width: 84px; } .block { width: 98px; }
.props { width: 151px; } .group { width: 49px; } .util { width: 73px; } .clip { width: 54px; }
.layer h2 { padding-right: 14px; }
.block h2 { padding-right: 0; }
.rest { flex: 1; background: linear-gradient(#aaa, #c8c8c8); }
.tool { display: flex; flex-direction: column; align-items: center; gap: 1px; }
.tool span { line-height: 12px; }
.tool .i28 { margin-top: -1px; }
.tool .i26 { margin-bottom: 2px; }
.draw .tool { width: 30px; }
.draw .body { padding-left: 2px; }
.draw .stack { margin-left: 2px; }
.draw .tool .caret, .util .tool .caret, .clip .tool .caret { margin-top: 1px; }
.stack { display: flex; flex-direction: column; gap: 2px; }
.row { height: 16px; display: flex; align-items: center; gap: 3px; }
.row .caret { margin-left: 4px; }
.split, .sq { height: 16px; border: 1px solid #cfcfcf; background: #f5f5f5; display: flex; align-items: center; justify-content: center; }
.split { width: 26px; gap: 6px; }
.sq { width: 17px; }
.sq.on { background: #9bcbf5; border-color: #4a90d0; }
.modify .body { padding-left: 5px; gap: 10px; }
.modify .end { margin-left: -4px; }
.layer .line { display: flex; align-items: center; gap: 2px; padding-left: 1px; }
.layer .body { padding-left: 1px; }
.layer .sq { width: 18px; }
.layer .field { height: 16px; padding-left: 2px; background: #f6f6f6; border: 1px solid #ddd; }
.layer .state { height: 16px; background: #f3f3f3; padding-left: 2px; text-align: left; }
.swatch { width: 11px; height: 11px; background: #fff; border: 1px solid #333; margin-right: 2px; }
.note .body { padding-left: 50px; }
.block .body { padding-left: 3px; gap: 4px; }
.props .body { padding-left: 2px; }
.prop { display: flex; align-items: center; gap: 2px; height: 16px; }
.combo { flex: 1; height: 16px; display: flex; align-items: center; padding: 0 4px 0 1px; border: 1px solid #d2d2d2; background: #f4f4f4; }
.combo select { flex: 1; min-width: 0; text-align: left; color: #333; }
.rule { width: 46px; height: 1px; background: #333; margin-right: 2px; }
.type .rule { width: 43px; margin-left: 3px; }
.group .body { padding-left: 1px; gap: 3px; }
.util .body, .clip .body { padding-left: 5px; justify-content: space-between; }
.util .body { padding-left: 7px; padding-right: 1px; }
.util .tool { width: 40px; }
.clip .tool { width: 26px; }

.canvas { flex: 1; min-height: 0; position: relative; margin-top: 5px; border-left: 1px solid #999; border-right: 2px solid #aaa; box-shadow: 0 -5px 0 #6a6c6a; background: #212830; }
.drawing { width: 100%; height: 100%; position: absolute; inset: 0; }
.ucs { fill: #c8cacc; font: 300 14px Lato, sans-serif; }
.viewlabel { position: absolute; left: 3px; top: 4px; color: #ddd; }
.compass { position: absolute; top: 11px; right: 11px; width: 66px; height: 66px; border: 7px solid #444b56; border-radius: 50%; color: #c9ccd0; display: grid; place-items: center; font-size: 10px; }
.cube { width: 28px; height: 28px; background: #b8bcc0; border: 2px solid #cfd1d3; color: #4c5258; font-size: 18px; line-height: 24px; }
.compass span { position: absolute; }
.n { top: -9px; } .s { bottom: -9px; } .w { left: -10px; } .e { right: -10px; }
.wcs { position: absolute; top: 91px; right: 27px; width: 35px; height: 12px; border-radius: 3px; border: 1px solid #b5b8c2; background: #9a9eac; color: #555b6a; font: 8px/10px "Liberation Sans", sans-serif; display: flex; align-items: center; justify-content: center; gap: 4px; }
.navbar { position: absolute; top: 122px; right: 2px; width: 24px; height: 156px; padding: 12px 0 14px; border-radius: 3px; border: 1px solid #686c70; background: #575b5f; display: flex; flex-direction: column; align-items: center; justify-content: space-between; }
.ball { position: absolute; right: -22px; top: 203px; width: 35px; height: 35px; border-radius: 50%; border: 2px solid #eee; background: linear-gradient(#55dd70, #35bd50); color: #fff; font-weight: 700; line-height: 31px; padding-left: 2px; }
.canvas { overflow: visible; }
.cmd { position: absolute; left: 200px; right: 201px; bottom: 1px; height: 20px; display: flex; align-items: center; gap: 3px; background: #bfbfc1; border: 1px solid #88898b; }
.cmd-left { align-self: stretch; width: 38px; padding-left: 3px; display: flex; align-items: center; gap: 5px; background: linear-gradient(#555, #737373); color: #e3e3e3; }
.grip { width: 4px; height: 12px; background: repeating-linear-gradient(#999 0 1px, #555 1px 2px); }
.cmd input { flex: 1; font-style: italic; padding-left: 4px; }
.cmd input::placeholder { color: #858587; opacity: 1; }

.sheets { flex: none; height: 12px; display: flex; background: #efefef; border-left: 1px solid #999; color: #222; }
.step { width: 10px; border-right: 1px solid #bbb; display: grid; place-items: center; }
.sheet { position: relative; padding: 0 6px 0 5px; line-height: 11px; }
.sheet::after { content: ""; position: absolute; right: -1px; top: 1px; width: 1px; height: 10px; background: #444; transform: skewX(-22deg); }
.sheet.on { margin-left: 2px; padding: 0 7px; background: #212830; color: #fff; clip-path: polygon(0 0, 100% 0, 88% 100%, 12% 100%); }
.status { flex: none; height: 17px; border-top: 2px solid #484848; padding-left: 5px; line-height: 15px; color: #111; background: linear-gradient(#929292, #717171); }

.taskbar { flex: none; height: 26px; display: flex; background: #04070b; color: #eee; }
.taskbar button { display: grid; place-items: center; }
.start { width: 35px; }
.search { width: 251px; display: flex; align-items: center; background: #333; font-size: 10px; padding: 0 8px; }
.ring { flex: none; width: 15px; height: 15px; border: 2px solid #eee; border-radius: 50%; }
.search input { flex: 1; padding-left: 6px; }
.search input::placeholder { color: #aaa; opacity: 1; }
.wide { width: 37px; }
.apps { flex: 1; display: flex; padding-left: 5px; }
.apps button { flex: 1; }
.apps .on { background: #33363a; }
.office { display: flex; width: 17px; height: 15px; align-items: center; }
.office b { width: 10px; line-height: 15px; text-align: center; background: var(--c); color: #fff; font-size: 8px; }
.office i { flex: 1; height: 11px; border: 1px solid var(--c); background: repeating-linear-gradient(#fff 0 2px, var(--c) 2px 3px); }
.tray { flex: none; width: 142px; padding-left: 2px; display: flex; font-size: 10px; }
.tray button { flex: 1; }
.sogou { width: 26px; }
.s-logo { width: 11px; height: 11px; border-radius: 2px; background: #f4512c; color: #fff; font: 700 10px/11px "Liberation Sans", sans-serif; text-align: center; transform: rotate(-8deg); }
.s-logo.large { width: 18px; height: 17px; font-size: 17px; line-height: 17px; }
.clock { width: 52px; text-align: center; line-height: 14px; white-space: nowrap; }
.notice { width: 32px; }
.peek { width: 8px; border-left: 1px solid #333; margin-left: auto; }

.ime { position: absolute; right: 0; bottom: 26px; width: 152px; height: 18px; display: flex; align-items: center; justify-content: space-between; padding-right: 3px; background: #f9fbfe; border: 1px solid #b9cfe8; border-left: 0; color: #1f78d0; font-size: 11px; }
.mark { position: absolute; right: 45px; bottom: 20px; width: 190px; height: 90px; pointer-events: none; }
.m-latin { font: 700 39px "Liberation Sans", sans-serif; }
.m-cjk { font: 700 30px "Noto Sans CJK SC", sans-serif; }
.m-url { font: 20px "Noto Sans", sans-serif; fill-opacity: .6; }
.m-du { font: 700 24px "Liberation Sans", sans-serif; fill: #2b3139; }

.context { position: absolute; left: 404px; top: 0; bottom: 26px; width: 141px; margin: 0; padding: 3px 2px 1px 1px; list-style: none; display: flex; flex-direction: column; background: #f1f1f1; border: 1px solid #ccc; border-top: 0; box-shadow: 2px 2px 2px rgba(0, 0, 0, .45); color: #222; }
.entry { flex: 1; display: flex; min-height: 0; }
.entry button { flex: 1; display: flex; align-items: center; gap: 8px; padding: 0 5px 0 2px; text-align: left; }
.entry span { flex: 1; }
.hot { background: #91c9f7; }
.sep { flex: none; height: 5px; margin-left: 21px; background: linear-gradient(#d0d0d0, #d0d0d0) 0 2px / 100% 1px no-repeat; }
.chev { width: 6px; height: 8px; }
.lasso { position: absolute; left: 399px; top: 224px; width: 108px; height: 20px; pointer-events: none; }
</style>
